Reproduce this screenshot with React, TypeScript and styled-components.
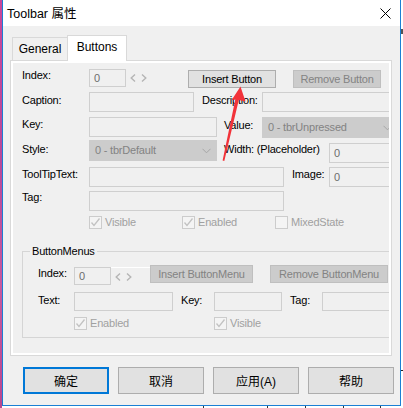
import styled, { createGlobalStyle } from "styled-components";

const palette = {
  frame: "#1b7fd4",
  face: "#f0f0f0",
  line: "#d9d9d9",
  edit: "#cfcfcf",
  disabledFace: "#cccccc",
  disabledBorder: "#bfbfbf",
  disabledText: "#838383",
  grayText: "#a0a0a0",
  button: "#e1e1e1",
  buttonBorder: "#adadad",
  focus: "#0078d7",
  marker: "#f2333a",
};

const GlobalStyle = createGlobalStyle`
  html, body {
    margin: 0;
    padding: 0;
    background: #ffffff;
  }
  body {
    font-family: "Liberation Sans", Arial, sans-serif;
  }
`;

const Screen = styled.div`
  position: relative;
  display: grid;
  grid-template-columns: 2px 399px 2px;
  grid-template-rows: 406px 2px;
  width: 403px;
  height: 408px;
  overflow: hidden;
  background: #ffffff;
`;

const LeftBehind = styled.div`
  grid-column: 1;
  grid-row: 1 / 3;
  background: linear-gradient(#c9479a, #b94a9a 40%, #c85a9e 70%, #b9478f);
`;

const RightBehind = styled.div`
  grid-column: 3;
  grid-row: 1 / 3;
  background-color: #ffffff;
  background-image: linear-gradient(#555, #555), linear-gradient(#222, #222);
  background-size: 2px 5px, 2px 1px;
  background-position: 0 29px, 0 370px;
  background-repeat: no-repeat;
`;

const BottomBehind = styled.div`
  grid-column: 2;
  grid-row: 2;
  background-color: #ffffff;
  background-image: linear-gradient(#333, #333), linear-gradient(#333, #333),
    linear-gradient(#333, #333), linear-gradient(#333, #333), linear-gradient(#333, #333);
  background-size: 1px 2px;
  background-position: 201px 0, 265px 0, 303px 0, 341px 0, 378px 0;
  background-repeat: no-repeat;
`;

const Window = styled.div`
  grid-column: 2;
  grid-row: 1;
  display: flex;
  flex-direction: column;
  box-sizing: border-box;
  border: 1px solid ${palette.frame};
  border-top: none;
  background: ${palette.face};
  overflow: hidden;
`;

const TitleBar = styled.div`
  display: flex;
  align-items: center;
  justify-content: space-between;
  height: 26px;
  padding: 0 9px 0 4px;
  background: #ffffff;
`;

const TitleText = styled.span`
  margin-top: -1px;
  font: 12.5px "Liberation Sans", "Noto Sans CJK SC", sans-serif;
  color: #000000;
`;

const Body = styled.div`
  flex: 1;
  padding: 9px 0 0 7px;
`;

const TabStrip = styled.div`
  position: relative;
  z-index: 1;
  display: flex;
  align-items: flex-end;
  height: 26px;
  margin-bottom: -1px;
  padding-left: 2px;
`;

const Tab = styled.div<{ $active?: boolean; $w: number }>`
  box-sizing: border-box;
  width: ${(p) => p.$w}px;
  height: ${(p) => (p.$active ? 26 : 23)}px;
  margin-bottom: ${(p) => (p.$active ? 0 : 1)}px;
  margin-left: ${(p) => (p.$active ? -1 : 0)}px;
  padding-bottom: ${(p) => (p.$active ? 3 : 0)}px;
  display: flex;
  align-items: center;
  justify-content: center;
  border: 1px solid ${palette.line};
  border-bottom: none;
  background: ${(p) => (p.$active ? "#ffffff" : palette.face)};
  font: 12px "Liberation Sans", Arial, sans-serif;
  color: #000000;
`;

const Panel = styled.div`
  box-sizing: border-box;
  width: 382px;
  height: 296px;
  padding: 2px;
  border: 1px solid ${palette.line};
  background: #ffffff;
`;

const Page = styled.div`
  box-sizing: border-box;
  height: 100%;
  padding: 6px 0 0 9px;
  overflow: hidden;
  background: ${palette.face};
  font: 11px/13px "Liberation Sans", Arial, sans-serif;
  letter-spacing: -0.2px;
  color: #000000;
`;

const Row = styled.div<{ $mt?: number; $h: number }>`
  display: flex;
  align-items: flex-start;
  height: ${(p) => p.$h}px;
  margin-top: ${(p) => p.$mt ?? 0}px;
  white-space: nowrap;
`;

const Label = styled.div<{ $w: number; $ml?: number; $pt?: number }>`
  flex: none;
  width: ${(p) => p.$w}px;
  margin-left: ${(p) => p.$ml ?? 0}px;
  padding-top: ${(p) => p.$pt ?? 0}px;
`;

const TextBox = styled.div<{ $w: number; $h?: number; $mt?: number }>`
  flex: none;
  box-sizing: border-box;
  display: flex;
  align-items: center;
  width: ${(p) => p.$w}px;
  height: ${(p) => p.$h ?? 20}px;
  margin-top: ${(p) => p.$mt ?? 0}px;
  padding-left: 4px;
  border: 1px solid ${palette.edit};
  background: ${palette.face};
  color: #6d6d6d;
`;

const DropDown = styled.div<{ $w: number }>`
  flex: none;
  box-sizing: border-box;
  display: flex;
  align-items: center;
  justify-content: space-between;
  width: ${(p) => p.$w}px;
  height: 21px;
  padding: 0 5px 0 5px;
  border: 1px solid ${palette.disabledFace};
  background: ${palette.disabledFace};
  color: ${palette.disabledText};
`;

const Spin = styled.div<{ $w: number; $mt?: number; $lit?: boolean }>`
  flex: none;
  box-sizing: border-box;
  display: flex;
  align-items: center;
  gap: 5px;
  width: ${(p) => p.$w}px;
  height: 18px;
  margin-top: ${(p) => p.$mt ?? 0}px;
  padding-left: 4px;
  border-top: ${(p) => (p.$lit ? "1px solid #ffffff" : "none")};
`;

const PushButton = styled.div<{ $w: number; $ml?: number; $mt?: number; $off?: boolean }>`
  flex: none;
  box-sizing: border-box;
  display: flex;
  align-items: center;
  justify-content: center;
  width: ${(p) => p.$w}px;
  height: 18px;
  margin-left: ${(p) => p.$ml ?? 0}px;
  margin-top: ${(p) => p.$mt ?? 0}px;
  border: 1px solid ${(p) => (p.$off ? palette.disabledBorder : palette.buttonBorder)};
  background: ${(p) => (p.$off ? palette.disabledFace : palette.button)};
  color: ${(p) => (p.$off ? palette.disabledText : "#000000")};
`;

const CheckItem = styled.div<{ $w?: number }>`
  flex: none;
  display: flex;
  align-items: center;
  gap: 3px;
  width: ${(p) => (p.$w ? `${p.$w}px` : "auto")};
  height: 13px;
  color: ${palette.grayText};
`;

const CheckBox = styled.span`
  box-sizing: border-box;
  display: flex;
  width: 13px;
  height: 13px;
  border: 1px solid ${palette.disabledFace};
  background: #f4f4f4;
`;

const Gap = styled.div<{ $w: number }>`
  flex: none;
  width: ${(p) => p.$w}px;
`;

const Group = styled.fieldset`
  box-sizing: border-box;
  width: 380px;
  min-width: 0;
  margin: 16px 0 0 0;
  padding: 0;
  border: 1px solid #d5d5d5;
`;

const GroupTitle = styled.legend`
  margin-left: 7px;
  padding: 0 2px;
  line-height: 12px;
`;

const GroupBody = styled.div`
  padding: 8px 0 7px 15px;
`;

const DialogButtons = styled.div`
  display: flex;
  gap: 9px;
  margin-top: 11px;
  padding-left: 13px;
`;

const DialogButton = styled.div<{ $primary?: boolean }>`
  box-sizing: border-box;
  display: flex;
  align-items: center;
  justify-content: center;
  width: 86px;
  height: 27px;
  border: ${(p) => (p.$primary ? `2px solid ${palette.focus}` : `1px solid ${palette.buttonBorder}`)};
  background: ${palette.button};
  font: 12px "Liberation Sans", "Noto Sans CJK SC", sans-serif;
  color: #000000;
`;

const Marker = styled.svg`
  position: absolute;
  left: 0;
  top: 0;
  pointer-events: none;
`;

const CloseGlyph = () => (
  <svg width="11" height="11" viewBox="0 0 11 11">
    <path d="M0.5 0.5 L10.5 10.5 M10.5 0.5 L0.5 10.5" stroke="#000" strokeWidth="1" />
  </svg>
);

const Chevron = () => (
  <svg width="9" height="6" viewBox="0 0 9 6">
    <polyline points="0.5,0.8 4.5,4.8 8.5,0.8" fill="none" stroke="#a6a6a6" strokeWidth="1" />
  </svg>
);

const SpinArrows = () => (
  <>
    <svg width="6" height="8" viewBox="0 0 6 8">
      <polyline points="5,0.5 1.2,4 5,7.5" fill="none" stroke="#b5b5b5" strokeWidth="1.4" />
    </svg>
    <svg width="6" height="8" viewBox="0 0 6 8">
      <polyline points="1,0.5 4.8,4 1,7.5" fill="none" stroke="#b5b5b5" strokeWidth="1.4" />
    </svg>
  </>
);

const Check = ({ label, checked = true, w }: { label: string; checked?: boolean; w?: number }) => (
  <CheckItem $w={w}>
    <CheckBox>
      {checked && (
        <svg width="11" height="11" viewBox="0 0 11 11">
          <polyline points="1.5,5.5 4,8.5 9.5,1.5" fill="none" stroke="#c2c2c2" strokeWidth="1.3" />
        </svg>
      )}
    </CheckBox>
    {label}
  </CheckItem>
);

export default function App() {
  return (
    <Screen>
      <GlobalStyle />
      <LeftBehind />
      <Window>
        <TitleBar>
          <TitleText>Toolbar 属性</TitleText>
          <CloseGlyph />
        </TitleBar>
        <Body>
          <TabStrip>
            <Tab $w={56}>General</Tab>
            <Tab $w={60} $active>
              Buttons
            </Tab>
          </TabStrip>
          <Panel>
            <Page>
              <Row $h={19}>
                <Label $w={67}>Index:</Label>
                <TextBox $w={37} $h={18}>0</TextBox>
                <Spin $w={62}>
                  <SpinArrows />
                </Spin>
                <PushButton $w={88} $mt={1}>Insert Button</PushButton>
                <PushButton $w={88} $ml={17} $mt={1} $off>
                  Remove Button
                </PushButton>
              </Row>
              <Row $h={20} $mt={4}>
                <Label $w={67} $pt={2}>Caption:</Label>
                <TextBox $w={105} />
                <Label $w={60} $ml={8} $pt={2}>Description:</Label>
                <TextBox $w={150} />
              </Row>
              <Row $h={21} $mt={5}>
                <Label $w={67} $pt={1}>Key:</Label>
                <TextBox $w={128} />
                <Label $w={38} $ml={7} $pt={2}>Value:</Label>
                <DropDown $w={150}>
                  <span>0 - tbrUnpressed</span>
                  <span style={{ marginRight: 14 }}>
                    <Chevron />
                  </span>
                </DropDown>
              </Row>
              <Row $h={23} $mt={2}>
                <Label $w={67} $pt={3}>Style:</Label>
                <DropDown $w={128}>
                  <span>0 - tbrDefault</span>
                  <Chevron />
                </DropDown>
                <Label $w={105} $ml={7} $pt={3}>Width: (Placeholder)</Label>
                <TextBox $w={80} $mt={3}>0</TextBox>
              </Row>
              <Row $h={20} $mt={4}>
                <Label $w={67} $pt={1}>ToolTipText:</Label>
                <TextBox $w={195} />
                <Label $w={37} $ml={8} $pt={1}>Image:</Label>
                <TextBox $w={80}>0</TextBox>
              </Row>
              <Row $h={20} $mt={4}>
                <Label $w={67}>Tag:</Label>
                <TextBox $w={195} />
              </Row>
              <Row $h={13} $mt={5}>
                <Gap $w={67} />
                <Check label="Visible" w={93} />
                <Check label="Enabled" w={93} />
                <Check label="MixedState" checked={false} />
              </Row>
              <Group>
                <GroupTitle>ButtonMenus</GroupTitle>
                <GroupBody>
                  <Row $h={20}>
                    <Label $w={36} $pt={2}>Index:</Label>
                    <TextBox $w={37} $h={18} $mt={2}>0</TextBox>
                    <Spin $w={39} $mt={2} $lit>
                      <SpinArrows />
                    </Spin>
                    <PushButton $w={103} $off>Insert ButtonMenu</PushButton>
                    <PushButton $w={118} $ml={17} $off>
                      Remove ButtonMenu
                    </PushButton>
                  </Row>
                  <Row $h={19} $mt={7}>
                    <Label $w={36} $pt={2}>Text:</Label>
                    <TextBox $w={99} $h={19} />
                    <Label $w={33} $ml={8} $pt={2}>Key:</Label>
                    <TextBox $w={68} $h={19} />
                    <Label $w={32} $ml={8} $pt={2}>Tag:</Label>
                    <TextBox $w={80} $h={19} />
                  </Row>
                  <Row $h={13} $mt={6}>
                    <Gap $w={36} />
                    <Check label="Enabled" w={140} />
                    <Check label="Visible" />
                  </Row>
                </GroupBody>
              </Group>
            </Page>
          </Panel>
          <DialogButtons>
            <DialogButton $primary>确定</DialogButton>
            <DialogButton>取消</DialogButton>
            <DialogButton>应用(A)</DialogButton>
            <DialogButton>帮助</DialogButton>
          </DialogButtons>
        </Body>
      </Window>
      <RightBehind />
      <BottomBehind />
      <Marker width="403" height="408" viewBox="0 0 403 408">
        <polygon
          points="240.5,86.5 245.5,101.5 238.8,100 224.3,161 222.6,160.6 235.3,99.4 231.5,100.2"
          fill={palette.marker}
        />
      </Marker>
    </Screen>
  );
}
